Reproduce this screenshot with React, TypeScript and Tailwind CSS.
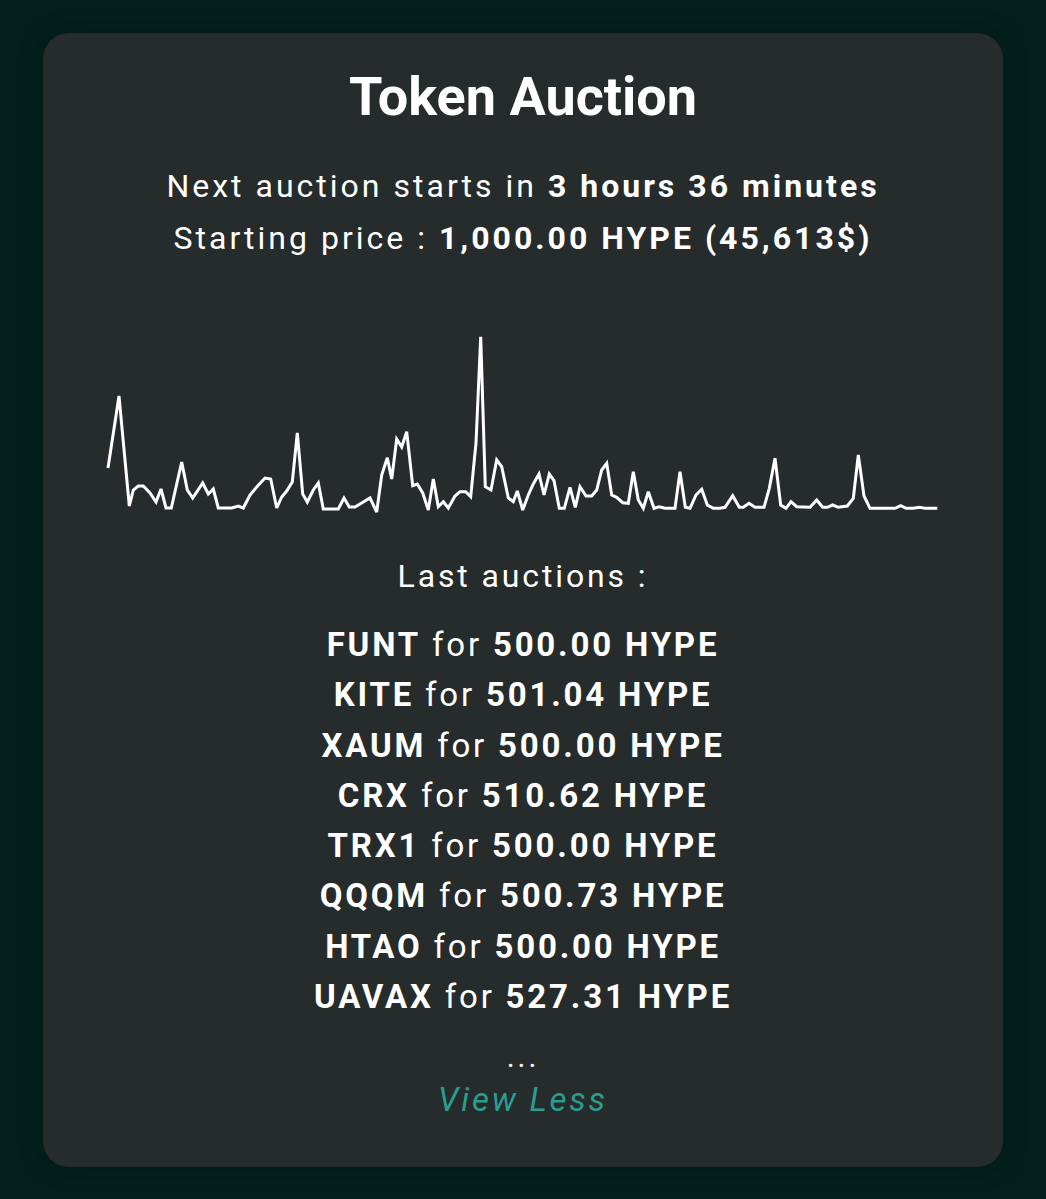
import React from "react";

const pts: [number, number][] = [
  [108, 468], [119, 396], [129.3, 506], [133.3, 490], [138.3, 486], [143.3, 486], [150, 493], [156, 502], [161, 489], [166, 508], [171.3, 508], [181.7, 462], [187.3, 490], [192.7, 498], [202.7, 483], [208.3, 494], [213.3, 489], [218.3, 508], [225, 508], [231.7, 508], [238.3, 506], [243.3, 508], [250, 495], [256.7, 487], [265, 478], [270.7, 479], [276.7, 508], [281.7, 497], [286.7, 491], [292.3, 482], [297.3, 433], [302.7, 494], [307.3, 502], [313.3, 490], [318.3, 483], [323.3, 509], [331.7, 509], [338.3, 509], [344, 498], [349.3, 507], [355, 507], [363.3, 502], [370, 498], [376.7, 512], [381.7, 475], [387.3, 457.7], [391.7, 479], [396.7, 439], [401.7, 447], [406.7, 431.7], [412.7, 485.7], [417.3, 484], [422.7, 493], [428.3, 510], [433.3, 479], [438.3, 506.7], [443.3, 501.7], [448.3, 508], [455, 496], [460, 491.7], [465.7, 491.7], [470.7, 496.7], [476, 443], [480.7, 336.7], [485.3, 486.7], [491, 490], [496.7, 460], [501.7, 466.7], [508.3, 498], [513.3, 501.7], [517.3, 491], [522.7, 510], [528.3, 495], [533.3, 484], [539, 474], [544, 495], [549.3, 474], [554, 480.7], [559.3, 508.3], [564.3, 508.3], [570, 487.3], [575.3, 507.3], [580, 486.7], [586, 496], [591.7, 496], [596.7, 490], [601.7, 470], [606.7, 463.3], [611.7, 495], [616.7, 497.3], [622.7, 502.7], [628.3, 503.3], [633.3, 471.7], [638.3, 500], [643.3, 508.3], [648.3, 491.7], [654, 508.3], [659.3, 506.7], [665, 508.3], [675, 508.3], [680, 471.7], [685.3, 507.3], [690, 508.3], [696, 495], [701.7, 489.3], [707.3, 505], [713.3, 508.3], [720, 508.3], [725, 507.3], [732.7, 495.7], [739.3, 507.3], [743.3, 507.3], [749, 503.3], [755, 507.3], [764, 507.3], [769.3, 488.3], [775, 458.3], [780.7, 505], [786, 508.3], [791, 501.7], [796.7, 506.7], [810, 507.3], [816.7, 500], [822.7, 507.3], [827.3, 507.3], [832.7, 505], [838.3, 507.3], [847.3, 506], [853.3, 498.3], [858.3, 455], [864, 496], [870, 508.3], [895, 508.3], [900.7, 505.7], [906, 508.3], [913.3, 508.3], [919.3, 507.3], [925, 508.3], [937.3, 508.3],
];

const auctions: [string, string][] = [
  ["FUNT", "500.00"],
  ["KITE", "501.04"],
  ["XAUM", "500.00"],
  ["CRX", "510.62"],
  ["TRX1", "500.00"],
  ["QQQM", "500.73"],
  ["HTAO", "500.00"],
  ["UAVAX", "527.31"],
];

export default function App() {
  return (
    <div
      className="min-h-[1199px] w-full bg-[#03201d] px-[43px] pt-[33px] pb-[32px] text-white"
      style={{ fontFamily: "Roboto, 'Noto Sans', sans-serif" }}
    >
      <div className="flex flex-col items-center rounded-[26px] bg-[#262b2b] pt-[33px] pb-[45px] shadow-[0_0_24px_rgba(0,0,0,0.25)]">
        <h1 className="text-[54px] leading-[62px] font-bold text-white">Token Auction</h1>
        <div className="mt-[32px] text-center text-[32px] leading-[52px] tracking-[0.094em] text-white">
          <div>
            Next auction starts in <span className="font-bold">3 hours 36 minutes</span>
          </div>
          <div>
            Starting price : <span className="font-bold">1,000.00 HYPE (45,613$)</span>
          </div>
        </div>
        <svg
          className="mt-[56px] block"
          width={960}
          height={200}
          viewBox="43 320 960 200"
        >
          <polyline
            points={pts.map((p) => p.join(",")).join(" ")}
            fill="none"
            stroke="#ffffff"
            strokeWidth={3}
            strokeLinejoin="miter"
            strokeMiterlimit={3}
          />
        </svg>
        <div className="mt-[30px] text-[32px] leading-[52px] tracking-[0.09em] text-white">Last auctions :</div>
        <div className="mt-[18px] flex flex-col items-center text-[33px] leading-[50.3px] tracking-[0.085em]">
          {auctions.map(([t, v]) => (
            <div key={t}>
              <span className="font-bold">{t}</span> for <span className="font-bold">{v} HYPE</span>
            </div>
          ))}
        </div>
        <div className="mt-[15px] text-[30px] leading-[40px] tracking-[0.1em]">...</div>
        <div className="mt-[1px] text-[33px] leading-[44px] italic tracking-[0.085em] text-[#2a9d90]">View Less</div>
      </div>
    </div>
  );
}
